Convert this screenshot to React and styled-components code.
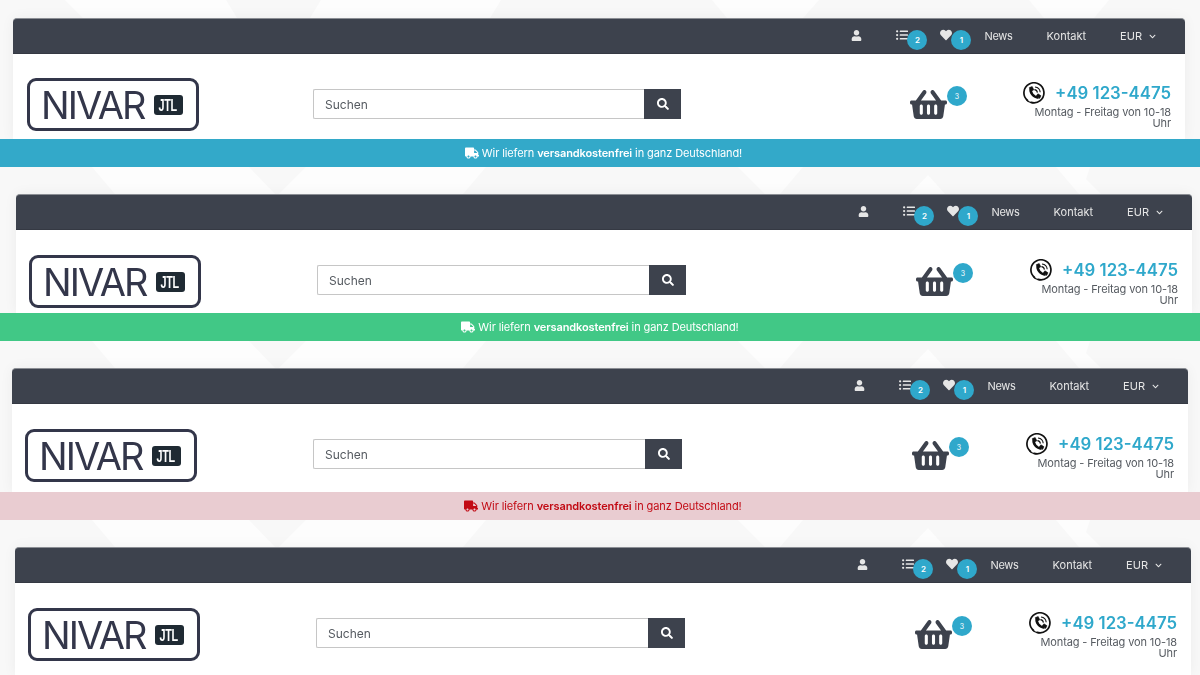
import styled, {createGlobalStyle} from 'styled-components';
import {FaUser, FaListUl, FaHeart, FaTruck, FaSearch, FaShoppingBasket, FaChevronDown} from 'react-icons/fa';

const GlobalStyle = createGlobalStyle`
    html {
        background: #f8f8f8;
    }
    body {
        margin: 0;
        padding: 0;
        font-family: Inter, "Open Sans", sans-serif;
        overflow: hidden;
    }
`;

const headers = [
    {left: 13, width: 1172, pad: 14, logoCol: 286, searchCol: 368, top: 24, height: 85, searchTop: 11, basketGap: 76, banner: 'blue', shift: 7},
    {left: 16, width: 1176, pad: 13, logoCol: 288, searchCol: 369, top: 25, height: 83, searchTop: 10, basketGap: 77, banner: 'green', shift: 0},
    {left: 12, width: 1176, pad: 13, logoCol: 288, searchCol: 369, top: 25, height: 88, searchTop: 10, basketGap: 77, banner: 'red', shift: 6},
    {left: 15, width: 1176, pad: 13, logoCol: 288, searchCol: 369, top: 25, height: 92, searchTop: 10, basketGap: 77},
];

const bannerColors = {
    blue: {bg: '#33a9c9', fg: '#ffffff'},
    green: {bg: '#41c886', fg: '#ffffff'},
    red: {bg: '#e9ccd1', fg: '#c20a14'},
};

// white facets of the page background, one list per gap between the headers
const gapFacets = (y) => [
    [92, 0, 249, 0, 275, 27, 115, 27],
    [306, 0, 486, 0, 463, 27, 279, 27],
    [738, 0, 803, 0, 780, 27, 765, 27],
    [928, 8, 945, 27, 910, 27],
    [1056, 0, 1090, 0, 1086, 12, 1101, 27, 1079, 27],
].map((p) => p.map((v, i) => (i % 2 ? v + y : v)).join(' '));

const facets = [
    '65 0 226 0 237 18 83 18',
    '321 0 501 0 490 18 310 18',
    '712 0 819 0 803 18 727 18',
    '1029 0 1109 0 1094 18 1044 18',
    ...gapFacets(167),
    ...gapFacets(341),
    ...gapFacets(520),
];

const PhoneIcon = () => (
    <svg width="23" height="22" viewBox="0 0 23 22" fill="none" stroke="#111">
        <path d="M4.5 18.5A10 10 0 1 1 8 20.4" strokeWidth="1.7" strokeLinecap="round" />
        <path d="M3.5 17.5Q5 20.5 10 20.8" strokeWidth="1.1" strokeLinecap="round" />
        <path d="M7.8 6.2C6.6 10.6 10.6 15.4 15.6 15.6" strokeWidth="2.6" />
        <path d="M6.4 5.6l2.8-1 1.6 3.2-2.4 1.4zM13.4 13.4l1.6-1.6 3 2-1.4 2.6z" fill="#111" strokeWidth="0.6" />
        <path d="M11.4 7.6a3.4 3.4 0 0 1 3 3M12 5a5.8 5.8 0 0 1 5.2 5.2" strokeWidth="1.1" />
    </svg>
);

function HeaderBlock({left, width, pad, logoCol, searchCol, top, height, searchTop, basketGap, banner, shift}) {
    return (
        <Section>
            <Panel $left={left} $width={width}>
                <TopBar>
                    <IconItem><FaUser size={11} /></IconItem>
                    <IconItem>
                        <FaListUl size={12} />
                        <Badge>2</Badge>
                    </IconItem>
                    <IconItem>
                        <FaHeart size={12} />
                        <Badge>1</Badge>
                    </IconItem>
                    <TextItem>News</TextItem>
                    <TextItem>Kontakt</TextItem>
                    <TextItem>EUR <FaChevronDown size={7} /></TextItem>
                </TopBar>
                <Body $top={top} $height={height} $pad={pad} $logoCol={logoCol} $searchCol={searchCol}>
                    <Logo>
                        <LogoName>NIVAR</LogoName>
                        <LogoBadge><LogoBadgeText>JTL</LogoBadgeText></LogoBadge>
                    </Logo>
                    <Search $top={searchTop}>
                        <SearchInput>Suchen</SearchInput>
                        <SearchButton><FaSearch size={12} /></SearchButton>
                    </Search>
                    <Basket $gap={basketGap}>
                        <FaShoppingBasket size={37} />
                        <BasketBadge>3</BasketBadge>
                    </Basket>
                    <Contact>
                        <PhoneRow>
                            <PhoneIcon />
                            <PhoneNumber>+49 123-4475</PhoneNumber>
                        </PhoneRow>
                        <Hours>Montag - Freitag von 10-18 Uhr</Hours>
                    </Contact>
                </Body>
            </Panel>
            {banner && (
                <Banner $kind={banner} $shift={shift}>
                    <FaTruck size={14} />
                    <span>Wir liefern <strong>versandkostenfrei</strong> in ganz Deutschland!</span>
                </Banner>
            )}
        </Section>
    );
}

function App() {
    return (
        <Page>
            <GlobalStyle />
            <Backdrop viewBox="0 0 1200 675" aria-hidden="true">
                {facets.map((points) => <polygon key={points} points={points} fill="#fdfdfd" />)}
            </Backdrop>
            {headers.map((h) => <HeaderBlock key={h.left} {...h} />)}
        </Page>
    );
}

const Page = styled.div`
    height: 675px;
    overflow: hidden;
    padding-top: 18px;
    box-sizing: border-box;
    display: flex;
    flex-direction: column;
    gap: 27px;
`;

const Backdrop = styled.svg`
    position: fixed;
    left: 0;
    top: 0;
    width: 1200px;
    height: 675px;
    z-index: -1;
`;

const Section = styled.section`
    flex: none;
`;

const Panel = styled.div`
    margin-left: ${(p) => p.$left}px;
    width: ${(p) => p.$width}px;
    border-radius: 4px 4px 0 0;
    box-shadow: 0 0 14px rgba(0, 0, 0, 0.05);
`;

const TopBar = styled.div`
    height: 36px;
    box-sizing: border-box;
    background: #3d424d;
    border-top: 1px solid #8b8e94;
    border-bottom: 1px solid #353943;
    border-radius: 4px 4px 0 0;
    display: flex;
    justify-content: flex-end;
    align-items: center;
    padding-right: 29px;
    color: #e6e6e6;
    font-size: 11px;
`;

const IconItem = styled.div`
    position: relative;
    display: flex;
    width: 12px;
    margin-right: 32px;
    transform: translateY(-1px);
    &:first-child {
        margin-right: 33px;
    }
`;

const Badge = styled.span`
    position: absolute;
    left: 11px;
    top: 1px;
    width: 20px;
    height: 20px;
    border-radius: 50%;
    background: #2fa8cb;
    color: #fff;
    font-size: 8px;
    font-weight: 600;
    display: flex;
    align-items: center;
    justify-content: center;
`;

const TextItem = styled.div`
    display: flex;
    align-items: center;
    gap: 7px;
    margin-left: 34px;
    &:nth-child(4) {
        margin-left: 0;
        letter-spacing: -0.3px;
    }
`;

const Body = styled.div`
    height: ${(p) => p.$height}px;
    box-sizing: border-box;
    padding: ${(p) => p.$top}px 14px 0 ${(p) => p.$pad}px;
    background: #fff;
    display: grid;
    grid-template-columns: ${(p) => p.$logoCol}px ${(p) => p.$searchCol}px 1fr auto;
    align-items: start;
`;

const Logo = styled.div`
    width: 172px;
    height: 53px;
    box-sizing: border-box;
    border: 3px solid #33364a;
    border-radius: 9px;
    display: flex;
    align-items: center;
    padding-left: 11px;
    color: #33364a;
`;

const LogoName = styled.span`
    font-size: 38px;
    font-weight: 400;
    letter-spacing: -1.9px;
    line-height: 1;
`;

const LogoBadge = styled.span`
    margin-left: 9px;
    width: 29px;
    height: 20px;
    border-radius: 3px;
    background: #1f2a33;
    display: flex;
    align-items: center;
    justify-content: center;
`;

const LogoBadgeText = styled.span`
    display: inline-block;
    color: #fff;
    font-family: "Liberation Sans", sans-serif;
    font-size: 15px;
    font-weight: 700;
    letter-spacing: -0.4px;
    transform: scale(0.72, 1.1);
`;

const Search = styled.div`
    margin-top: ${(p) => p.$top}px;
    height: 30px;
    display: flex;
`;

const SearchInput = styled.div`
    flex: 1;
    box-sizing: border-box;
    border: 1px solid #c6c6c6;
    border-right: none;
    border-radius: 2px 0 0 2px;
    padding-left: 11px;
    display: flex;
    align-items: center;
    font-size: 12px;
    color: #555a60;
`;

const SearchButton = styled.div`
    width: 37px;
    background: #3d424d;
    color: #fff;
    display: flex;
    align-items: center;
    justify-content: center;
`;

const Basket = styled.div`
    position: relative;
    justify-self: end;
    margin: 8px ${(p) => p.$gap}px 0 0;
    display: flex;
    color: #3d424d;
`;

const BasketBadge = styled.span`
    position: absolute;
    left: 37px;
    top: 0;
    width: 20px;
    height: 20px;
    border-radius: 50%;
    background: #2fa8cb;
    color: #fff;
    font-size: 7px;
    display: flex;
    align-items: center;
    justify-content: center;
`;

const Contact = styled.div`
    width: 148px;
    margin-top: 5px;
    text-align: right;
`;

const PhoneRow = styled.div`
    display: flex;
    justify-content: space-between;
    align-items: center;
    height: 20px;
`;

const PhoneNumber = styled.span`
    font-size: 16.8px;
    font-weight: 600;
    color: #2fa8cb;
`;

const Hours = styled.div`
    margin: 4px 0 0 auto;
    width: 140px;
    font-size: 11px;
    letter-spacing: -0.12px;
    line-height: 11px;
    color: #555a60;
`;

const Banner = styled.div`
    height: 28px;
    box-sizing: border-box;
    padding-left: ${(p) => p.$shift}px;
    background: ${(p) => bannerColors[p.$kind].bg};
    color: ${(p) => bannerColors[p.$kind].fg};
    display: flex;
    align-items: center;
    justify-content: center;
    gap: 3px;
    font-size: 11px;
    letter-spacing: -0.1px;
    strong {
        font-weight: 600;
    }
`;

export default App;
